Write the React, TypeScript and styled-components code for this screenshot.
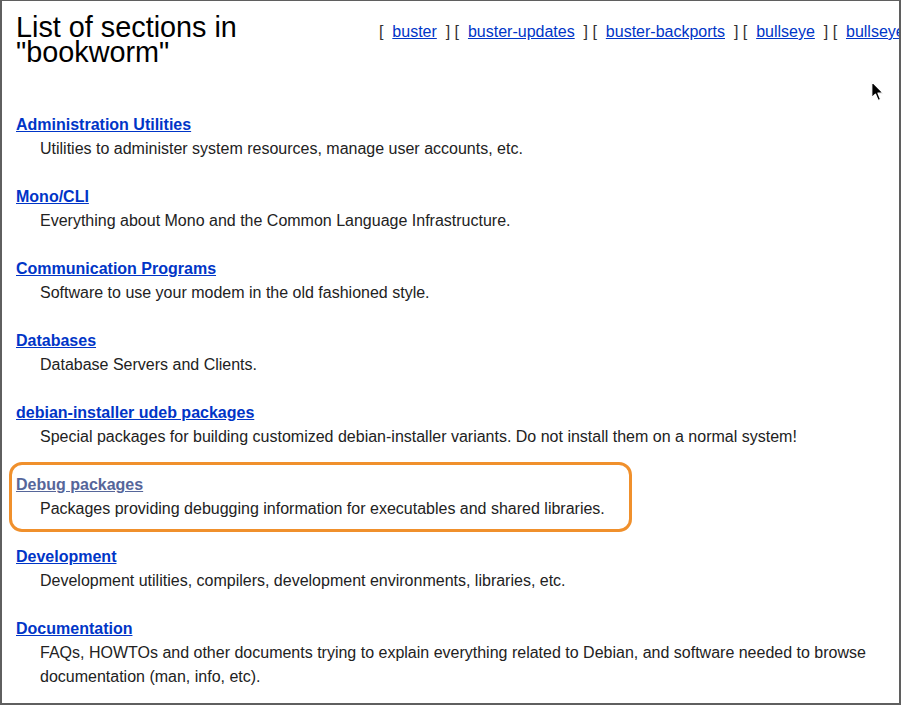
import React from "react";
import styled, { createGlobalStyle, css } from "styled-components";

const GlobalStyle = createGlobalStyle`
  html, body {
    margin: 0;
    padding: 0;
    background: #ffffff;
  }
  body {
    font-family: "Liberation Sans", Arial, sans-serif;
    color: #222222;
  }
`;

const Frame = styled.div`
  position: relative;
  width: 901px;
  height: 705px;
  box-sizing: border-box;
  border-top: 1px solid #5f5f5f;
  border-left: 2px solid #5f5f5f;
  border-right: 2px solid #5f5f5f;
  border-bottom: 2px solid #5f5f5f;
  overflow: hidden;
  background: #ffffff;
`;

const Header = styled.header`
  display: flex;
  align-items: baseline;
  padding-left: 14px;
`;

const Title = styled.h1`
  flex: 0 0 363px;
  margin: 14px 0 0 0;
  font-size: 28.8px;
  line-height: 24.6px;
  font-weight: 400;
  color: #000000;
`;

const SuiteNav = styled.nav`
  flex: 1 1 auto;
  white-space: pre;
  font-size: 16px;
  line-height: 24px;
  color: #333333;
  overflow: hidden;
`;

const SuiteLink = styled.a`
  color: #0035c7;
  text-decoration: underline;
`;

const SectionList = styled.dl`
  margin: 49px 0 0 0;
  padding: 0 14px;
  font-size: 16px;
  line-height: 24px;
`;

const Section = styled.div<{ $highlighted?: boolean }>`
  position: relative;
  ${(p) =>
    p.$highlighted &&
    css`
      &::before {
        content: "";
        position: absolute;
        left: -7px;
        top: -11px;
        width: 623px;
        height: 70px;
        box-sizing: border-box;
        border: 3px solid #f0902c;
        border-radius: 13px;
        pointer-events: none;
      }
    `}
`;

const SectionTitle = styled.dt`
  font-weight: 700;
`;

const SectionLink = styled.a<{ $visited?: boolean }>`
  color: ${(p) => (p.$visited ? "#56669a" : "#0035c7")};
  text-decoration: underline;
`;

const SectionDesc = styled.dd`
  margin: 0 0 24px 24px;
  color: #222222;
`;

const Cursor = styled.svg`
  position: absolute;
  left: 868px;
  top: 79px;
`;

const suites = ["buster", "buster-updates", "buster-backports", "bullseye", "bullseye-updates", "bullseye-backports"];

const sections: { name: string; desc: string; visited?: boolean }[] = [
  { name: "Administration Utilities", desc: "Utilities to administer system resources, manage user accounts, etc." },
  { name: "Mono/CLI", desc: "Everything about Mono and the Common Language Infrastructure." },
  { name: "Communication Programs", desc: "Software to use your modem in the old fashioned style." },
  { name: "Databases", desc: "Database Servers and Clients." },
  {
    name: "debian-installer udeb packages",
    desc: "Special packages for building customized debian-installer variants. Do not install them on a normal system!",
  },
  {
    name: "Debug packages",
    desc: "Packages providing debugging information for executables and shared libraries.",
    visited: true,
  },
  { name: "Development", desc: "Development utilities, compilers, development environments, libraries, etc." },
  {
    name: "Documentation",
    desc: "FAQs, HOWTOs and other documents trying to explain everything related to Debian, and software needed to browse documentation (man, info, etc).",
  },
];

export default function App() {
  return (
    <>
      <GlobalStyle />
      <Frame>
        <Header>
          <Title>
            List of sections in
            <br />
            "bookworm"
          </Title>
          <SuiteNav>
            {suites.map((s, i) => (
              <React.Fragment key={s}>
                {i > 0 ? " " : ""}[{"  "}
                <SuiteLink href="#">{s}</SuiteLink>
                {"  "}]
              </React.Fragment>
            ))}
          </SuiteNav>
        </Header>
        <SectionList>
          {sections.map((s) => (
            <Section key={s.name} $highlighted={s.visited}>
              <SectionTitle>
                <SectionLink href="#" $visited={s.visited}>
                  {s.name}
                </SectionLink>
              </SectionTitle>
              <SectionDesc>{s.desc}</SectionDesc>
            </Section>
          ))}
        </SectionList>
        <Cursor width="15" height="23" viewBox="0 0 14 22">
          <path
            d="M1.5 1.5 L1.5 17 L5 13.5 L7.6 19.6 L10 18.6 L7.5 12.6 L12.4 12.6 Z"
            fill="#000000"
            stroke="#ffffff"
            strokeWidth="1.2"
            strokeLinejoin="round"
          />
        </Cursor>
      </Frame>
    </>
  );
}
